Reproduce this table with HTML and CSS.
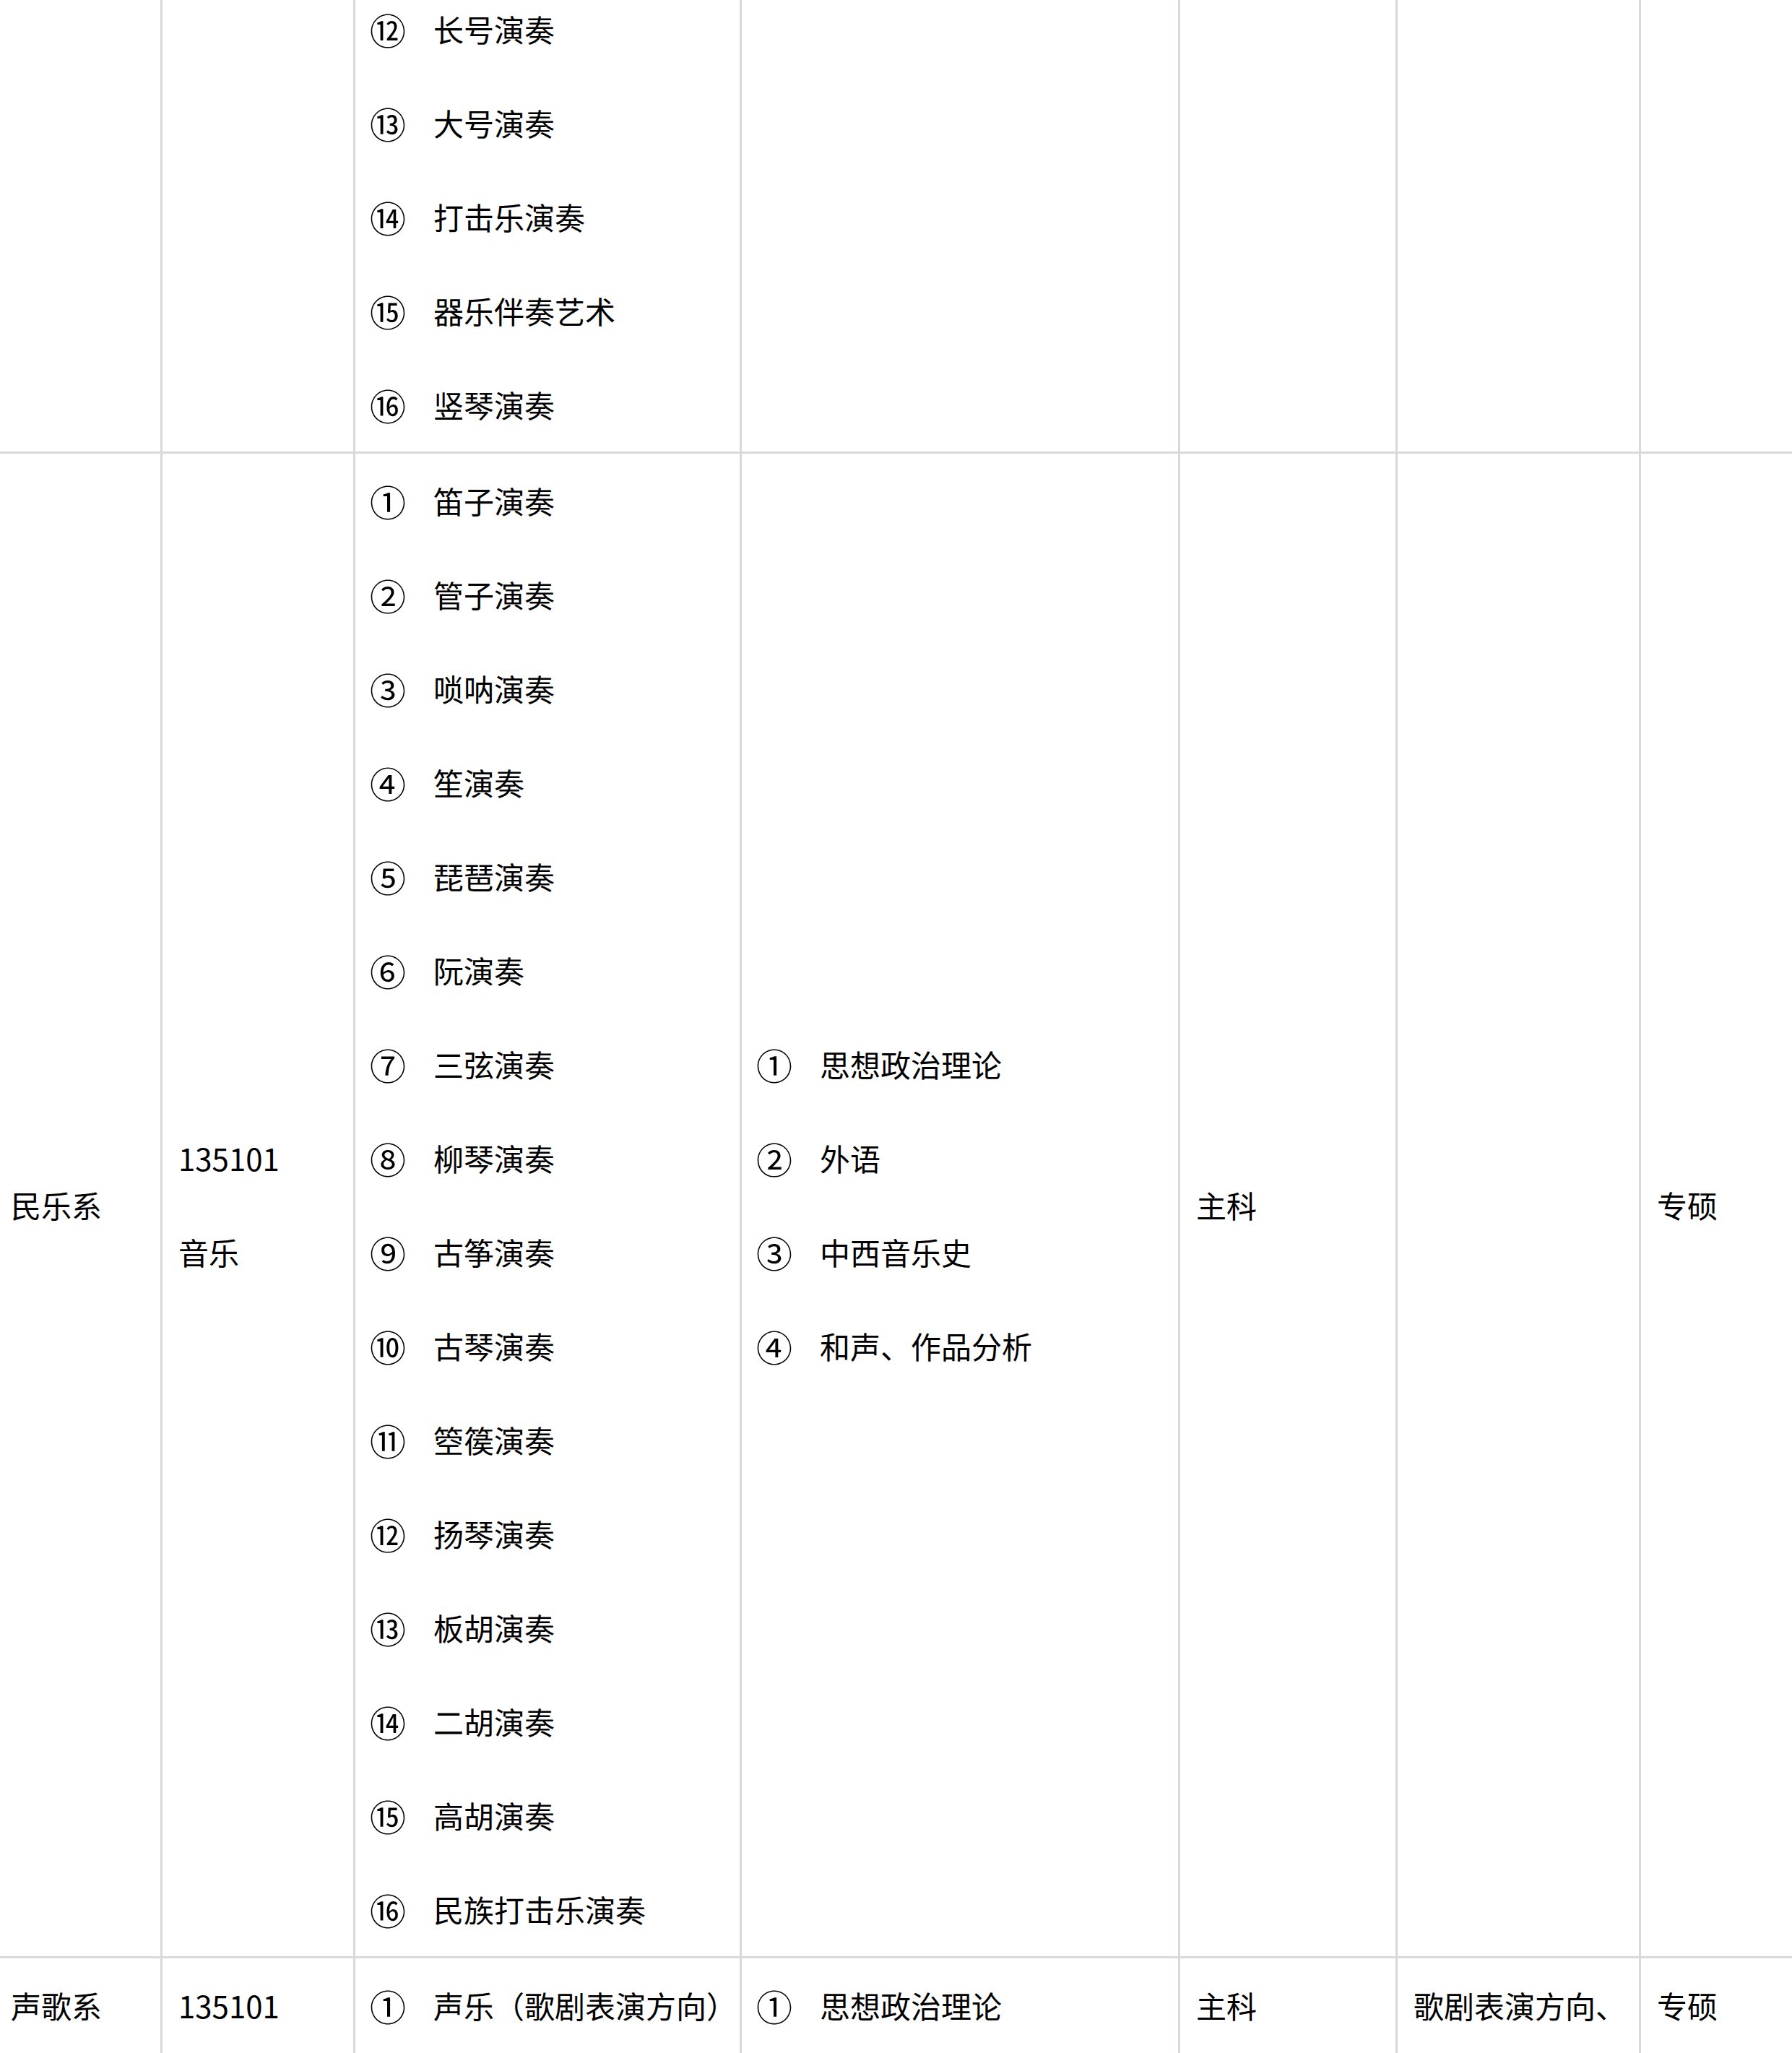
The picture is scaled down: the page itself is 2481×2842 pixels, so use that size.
FILE: index.html
```html
<!DOCTYPE html>
<html lang="zh-CN">
<head>
<meta charset="utf-8">
<title>招生专业目录</title>
<link rel="stylesheet" href="styles.css">
</head>
<body>
<div class="sheet">
  <div class="row">
    <div class="cell"></div>
    <div class="cell"></div>
    <div class="cell">
      <div class="item"><span class="num">⑫</span><span>长号演奏</span></div>
      <div class="item"><span class="num">⑬</span><span>大号演奏</span></div>
      <div class="item"><span class="num">⑭</span><span>打击乐演奏</span></div>
      <div class="item"><span class="num">⑮</span><span>器乐伴奏艺术</span></div>
      <div class="item"><span class="num">⑯</span><span>竖琴演奏</span></div>
    </div>
    <div class="cell"></div>
    <div class="cell"></div>
    <div class="cell"></div>
    <div class="cell"></div>
  </div>

  <div class="row">
    <div class="cell"><div class="line">民乐系</div></div>
    <div class="cell">
      <div class="line">135101</div>
      <div class="line">音乐</div>
    </div>
    <div class="cell">
      <div class="item"><span class="num">①</span><span>笛子演奏</span></div>
      <div class="item"><span class="num">②</span><span>管子演奏</span></div>
      <div class="item"><span class="num">③</span><span>唢呐演奏</span></div>
      <div class="item"><span class="num">④</span><span>笙演奏</span></div>
      <div class="item"><span class="num">⑤</span><span>琵琶演奏</span></div>
      <div class="item"><span class="num">⑥</span><span>阮演奏</span></div>
      <div class="item"><span class="num">⑦</span><span>三弦演奏</span></div>
      <div class="item"><span class="num">⑧</span><span>柳琴演奏</span></div>
      <div class="item"><span class="num">⑨</span><span>古筝演奏</span></div>
      <div class="item"><span class="num">⑩</span><span>古琴演奏</span></div>
      <div class="item"><span class="num">⑪</span><span>箜篌演奏</span></div>
      <div class="item"><span class="num">⑫</span><span>扬琴演奏</span></div>
      <div class="item"><span class="num">⑬</span><span>板胡演奏</span></div>
      <div class="item"><span class="num">⑭</span><span>二胡演奏</span></div>
      <div class="item"><span class="num">⑮</span><span>高胡演奏</span></div>
      <div class="item"><span class="num">⑯</span><span>民族打击乐演奏</span></div>
    </div>
    <div class="cell">
      <div class="item"><span class="num">①</span><span>思想政治理论</span></div>
      <div class="item"><span class="num">②</span><span>外语</span></div>
      <div class="item"><span class="num">③</span><span>中西音乐史</span></div>
      <div class="item"><span class="num">④</span><span>和声、作品分析</span></div>
    </div>
    <div class="cell"><div class="line">主科</div></div>
    <div class="cell"></div>
    <div class="cell"><div class="line">专硕</div></div>
  </div>

  <div class="row row-top">
    <div class="cell"><div class="line">声歌系</div></div>
    <div class="cell"><div class="line">135101</div></div>
    <div class="cell">
      <div class="item"><span class="num">①</span><span>声乐（歌剧表演方向）</span></div>
    </div>
    <div class="cell">
      <div class="item"><span class="num">①</span><span>思想政治理论</span></div>
    </div>
    <div class="cell"><div class="line">主科</div></div>
    <div class="cell"><div class="line">歌剧表演方向、</div></div>
    <div class="cell"><div class="line">专硕</div></div>
  </div>
</div>
</body>
</html>
```

FILE: styles.css
```css
html, body {
  margin: 0;
  padding: 0;
  background: #ffffff;
  overflow: hidden;
}

.sheet {
  margin-top: -25px;
  margin-left: -7px;
  font-family: "Noto Sans CJK SC", "Noto Sans", sans-serif;
  font-size: 42px;
  color: #000000;
}

.row {
  display: grid;
  grid-template-columns: 232px 267px 535px 607px 301px 337px 300px;
}

.cell {
  box-sizing: border-box;
  border-right: 3px solid #d9d9d9;
  border-bottom: 3px solid #d9d9d9;
  padding: 0 10px 0 22px;
  display: flex;
  flex-direction: column;
  justify-content: center;
  min-width: 0;
}

.row-top .cell {
  justify-content: flex-start;
  min-height: 300px;
}

.line,
.item {
  height: 130px;
  line-height: 130px;
  white-space: nowrap;
}

.item {
  display: flex;
  align-items: center;
}

.num {
  flex: 0 0 86px;
  margin-left: -2px;
  margin-right: 2px;
  font-size: 50px;
  line-height: 130px;
}
```
